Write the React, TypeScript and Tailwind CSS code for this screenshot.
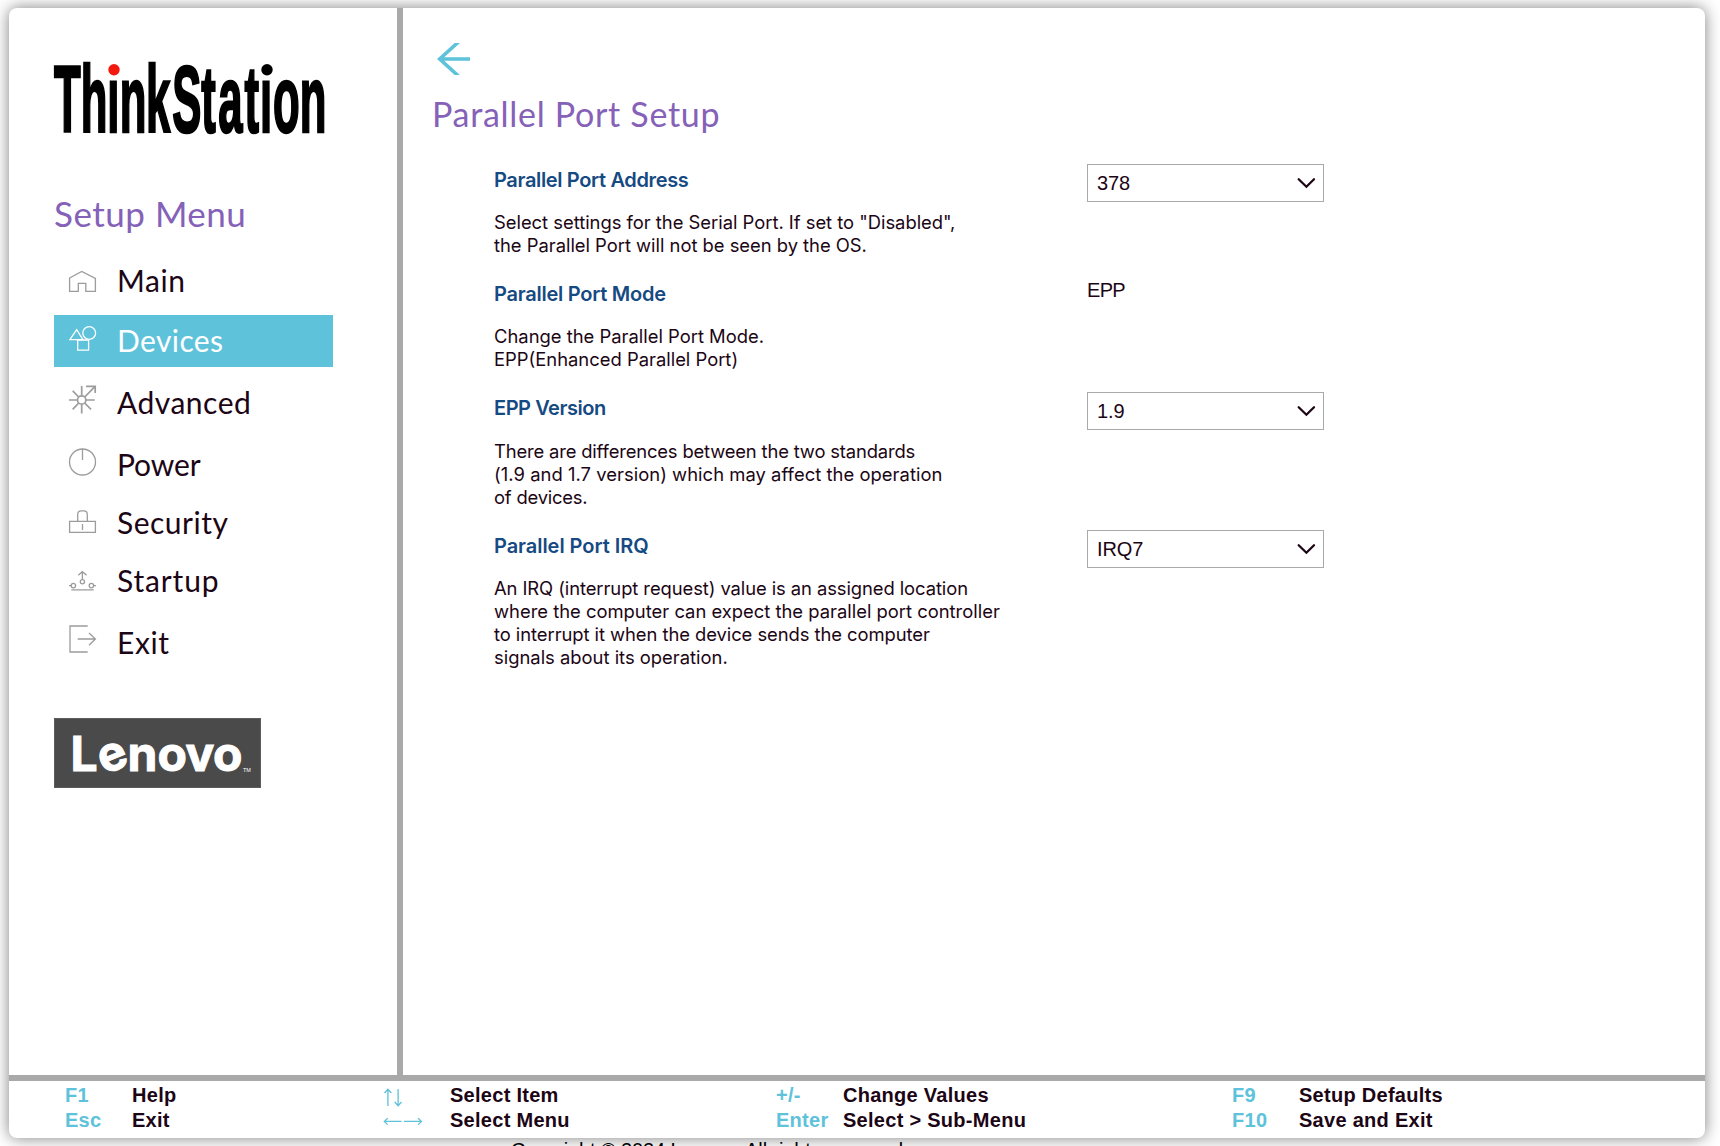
import type { ReactNode } from "react";

type NavItem = { label: string; icon: ReactNode; gap: string; text: string; active?: boolean };

const NAV: NavItem[] = [
  {
    label: "Main",
    gap: "",
    text: "pb-0.5",
    icon: <path d="M.6 17 12.7 10.4 26.4 17.4V30.4H16.8V22.4H9.3V30.4H.6Z" />,
  },
  {
    label: "Devices",
    gap: "mt-2",
    text: "pb-0.5 tracking-[0.4px]",
    active: true,
    icon: (
      <>
        <path d="M7.7 8.6.9 18.7H13.9Z" />
        <circle cx="20.2" cy="12" r="6.4" />
        <path d="M8.7 19H19.6V29.2H8.7Z" />
      </>
    ),
  },
  {
    label: "Advanced",
    gap: "mt-[9px]",
    text: "tracking-[0.5px]",
    icon: (
      <g strokeWidth="1.7">
        <circle cx="12.7" cy="18" r="4.2" />
        <path d="M12.7 13.8V4M12.7 22.2V31.4M8.5 18H0M16.9 18H25.7M9.7 15 3.7 8.9M9.7 21 3.7 27.3M15.7 21 22 27.3M15.7 15 26.2 4.4M17 4.4H26.2V11" />
      </g>
    ),
  },
  {
    label: "Power",
    gap: "mt-[10px]",
    text: "tracking-[-0.1px]",
    icon: (
      <>
        <circle cx="13.5" cy="18" r="13" />
        <path d="M13.5 5V16" />
      </>
    ),
  },
  {
    label: "Security",
    gap: "mt-[5px]",
    text: "pt-px tracking-[0.5px]",
    icon: (
      <path d="M.6 20.4H26.4V31.4H.6ZM13.5 23V29M8.7 20V13.5Q8.7 9.9 12.2 9.9H14.8Q18.3 9.9 18.3 13.5V20" />
    ),
  },
  {
    label: "Startup",
    gap: "mt-[6px]",
    text: "pt-px tracking-[0.85px]",
    icon: (
      <>
        <circle cx="4.4" cy="26.6" r="2.2" />
        <circle cx="22.4" cy="26.6" r="2.2" />
        <circle cx="13.4" cy="22.7" r="2.1" />
        <path d="M2.3 30.8H24.7M0 26.6H2.2M24.6 26.6H27M13.4 20.6V13M9.3 16.2 13.4 12.7 17.6 16.2" />
      </>
    ),
  },
  {
    label: "Exit",
    gap: "mt-[10px]",
    text: "pt-px",
    icon: <path d="M18.7 5H1V31H18.7M8.7 18H26.4M20 12 26.4 18 20 24.3" />,
  },
];

type Setting = {
  title: string;
  titleTracking: string;
  lines: [string, string][];
  value: string;
  fixed?: boolean;
  height: string;
};

const SETTINGS: Setting[] = [
  {
    title: "Parallel Port Address",
    titleTracking: "tracking-[-0.35px]",
    lines: [
      ['Select settings for the Serial Port. If set to "Disabled",', "tracking-[-0.02px]"],
      ["the Parallel Port will not be seen by the OS.", "tracking-[-0.02px]"],
    ],
    value: "378",
    height: "h-[114px]",
  },
  {
    title: "Parallel Port Mode",
    titleTracking: "tracking-[-0.25px]",
    lines: [
      ["Change the Parallel Port Mode.", "tracking-normal"],
      ["EPP(Enhanced Parallel Port)", "tracking-normal"],
    ],
    value: "EPP",
    fixed: true,
    height: "h-[114px]",
  },
  {
    title: "EPP Version",
    titleTracking: "tracking-[-0.45px]",
    lines: [
      ["There are differences between the two standards", "tracking-[-0.16px]"],
      ["(1.9 and 1.7 version) which may affect the operation", "tracking-[0.04px]"],
      ["of devices.", "tracking-[-0.2px]"],
    ],
    value: "1.9",
    height: "h-[138px] [&_p]:pt-px",
  },
  {
    title: "Parallel Port IRQ",
    titleTracking: "tracking-[-0.05px]",
    lines: [
      ["An IRQ (interrupt request) value is an assigned location", "tracking-[-0.08px]"],
      ["where the computer can expect the parallel port controller", "tracking-normal"],
      ["to interrupt it when the device sends the computer", "tracking-[-0.06px]"],
      ["signals about its operation.", "tracking-normal"],
    ],
    value: "IRQ7",
    height: "h-[160px]",
  },
];

const UpDown = () => (
  <svg className="block h-[25px] w-10 fill-none stroke-[#5ec2db]" viewBox="0 0 40 25" strokeWidth="1.3">
    <path d="M4.9 23V6.5M1.5 10 4.9 6.2 8.3 10M15.1 6V22.5M11.7 19 15.1 22.8 18.5 19" />
  </svg>
);

const LeftRight = () => (
  <svg className="block h-[25px] w-10 fill-none stroke-[#5ec2db]" viewBox="0 0 40 25" strokeWidth="1.3">
    <path d="M18.5 13.4H1.5M4.7 10.2 1.3 13.4 4.7 16.6M21 13.4H38.5M35.1 10.2 38.5 13.4 35.1 16.6" />
  </svg>
);

const KEYS: { width: string; rows: [ReactNode, string][] }[] = [
  { width: "w-[318px]", rows: [["F1", "Help"], ["Esc", "Exit"]] },
  { width: "w-[393px]", rows: [[<UpDown />, "Select Item"], [<LeftRight />, "Select Menu"]] },
  { width: "w-[456px]", rows: [["+/-", "Change Values"], ["Enter", "Select > Sub-Menu"]] },
  { width: "w-[300px]", rows: [["F9", "Setup Defaults"], ["F10", "Save and Exit"]] },
];

function ThinkStationLogo() {
  return (
    <svg className="block h-[72px] w-[276px] overflow-visible" viewBox="0 0 276 72">
      <text
        transform="translate(0 69) scale(.46 1)"
        x="0 58 116 143 200 257 320 357 414 448 476 534"
        y="0"
        className="fill-black stroke-black font-['Liberation_Sans',sans-serif] text-[95px] font-bold"
        strokeWidth="2.6"
      >
        ThinkStation
      </text>
      <rect x="53.6" y="-4" width="13.6" height="17.5" fill="#fff" />
      <rect x="206.6" y="-4" width="13.6" height="17.5" fill="#fff" />
      <circle cx="60" cy="6.8" r="5.7" fill="#f3190f" />
      <circle cx="213" cy="6.8" r="5.7" fill="#000" />
    </svg>
  );
}

function LenovoLogo() {
  return (
    <svg className="block h-[70px] w-[207px] border border-[#5c5c5c] bg-[#4a4a4a]" viewBox="1 1 205 68">
      <text
        y="52.5"
        x="16.5 50.2 73.5 103.5 131.5 159"
        dy="0 4.2 -4.2"
        rotate="0 -22 0 0 0 0"
        className="fill-white stroke-white font-['Inter',sans-serif] text-[48px] font-bold"
        strokeWidth="1"
      >
        Lenovo
      </text>
      <text x="189" y="53.5" className="fill-white font-['Liberation_Sans',sans-serif] text-[5.5px]">
        TM
      </text>
    </svg>
  );
}

function Select({ value }: { value: string }) {
  return (
    <div className="flex h-[38px] w-[237px] items-center justify-between border border-[#a9a9a9] pr-[7px] pl-[9px]">
      <span className="leading-6 tracking-[-0.1px]">{value}</span>
      <svg className="h-3 w-5 fill-none stroke-[#1c0615]" viewBox="0 0 20 12" strokeWidth="2.3" strokeLinecap="round">
        <path d="M2.7 2.2 10.4 9.7 18 2.2" />
      </svg>
    </div>
  );
}

export default function App() {
  return (
    <div className="h-[1146px] w-[1720px] overflow-hidden bg-white pt-2 pl-[9px] font-['Liberation_Sans',sans-serif] text-xl text-[#1c0615]">
      <div className="flex h-[1130px] w-[1696px] flex-col rounded-lg bg-white shadow-[0_0_16px_rgba(0,0,0,0.5)]">
        <div className="flex h-[1067px]">
          <aside className="w-[394px] border-r-[6px] border-[#a9a9a9] pt-[55px] pl-[45px]">
            <ThinkStationLogo />
            <h1 className="mt-[58px] h-[40px] font-['Lato',sans-serif] text-[35px] leading-[40px] tracking-[0.5px] text-[#8561b8]">
              Setup Menu
            </h1>
            <nav className="mt-[22px] font-['Lato',sans-serif] text-[30px] tracking-[0.6px]">
              {NAV.map((n) => (
                <a
                  key={n.label}
                  className={`flex h-[52px] w-[279px] items-center pl-[15px] ${n.gap} ${n.active ? "bg-[#5ec2db] text-white" : ""}`}
                >
                  <svg
                    className={`h-10 w-7 overflow-visible fill-none ${n.active ? "stroke-white" : "stroke-[#9c9c9c]"}`}
                    viewBox="0 0 28 40"
                    strokeWidth="1.3"
                  >
                    {n.icon}
                  </svg>
                  <span className={`ml-5 leading-[40px] ${n.text}`}>{n.label}</span>
                </a>
              ))}
            </nav>
            <div className="mt-[51px]">
              <LenovoLogo />
            </div>
          </aside>

          <main className="flex-1 pt-[35px] pl-7">
            <svg className="ml-[6px] block h-8 w-[33px] fill-none stroke-[#5ec2db]" viewBox="0 0 33 32" strokeWidth="3.6">
              <path d="M22.5-2 2.7 16 22.5 34M3 16H33" />
            </svg>
            <h2 className="mt-[19px] ml-px h-10 font-['Lato',sans-serif] text-[34px] leading-10 tracking-[0.7px] text-[#8561b8]">
              Parallel Port Setup
            </h2>
            <div className="mt-[30px] ml-[63px]">
              {SETTINGS.map((s) => (
                <section key={s.title} className={`grid grid-cols-[593px_1fr] ${s.height}`}>
                  <div className="font-['Inter',sans-serif]">
                    <h3 className={`text-[20px] leading-8 font-semibold text-[#164a82] ${s.titleTracking}`}>{s.title}</h3>
                    <p className="mt-[15px] text-[18.4px] leading-[23px]">
                      {s.lines.map(([line, tracking]) => (
                        <span key={line} className={`block whitespace-nowrap ${tracking}`}>
                          {line}
                        </span>
                      ))}
                    </p>
                  </div>
                  {s.fixed ? <div className="leading-6 tracking-[-0.7px]">{s.value}</div> : <Select value={s.value} />}
                </section>
              ))}
            </div>
          </main>
        </div>

        <footer className="flex flex-1 border-t-[6px] border-[#a9a9a9] pt-0.5 pl-14 font-bold tracking-[0.28px]">
          {KEYS.map((k, i) => (
            <div key={i} className={k.width}>
              {k.rows.map(([key, label]) => (
                <div key={label} className="flex h-[25px] leading-[25px]">
                  <span className="w-[67px] text-[#5ec2db]">{key}</span>
                  <span>{label}</span>
                </div>
              ))}
            </div>
          ))}
        </footer>
      </div>
      <p className="ml-[502px] leading-6 tracking-[-0.12px] text-black">Copyright © 2024 Lenovo. All rights reserved.</p>
    </div>
  );
}
